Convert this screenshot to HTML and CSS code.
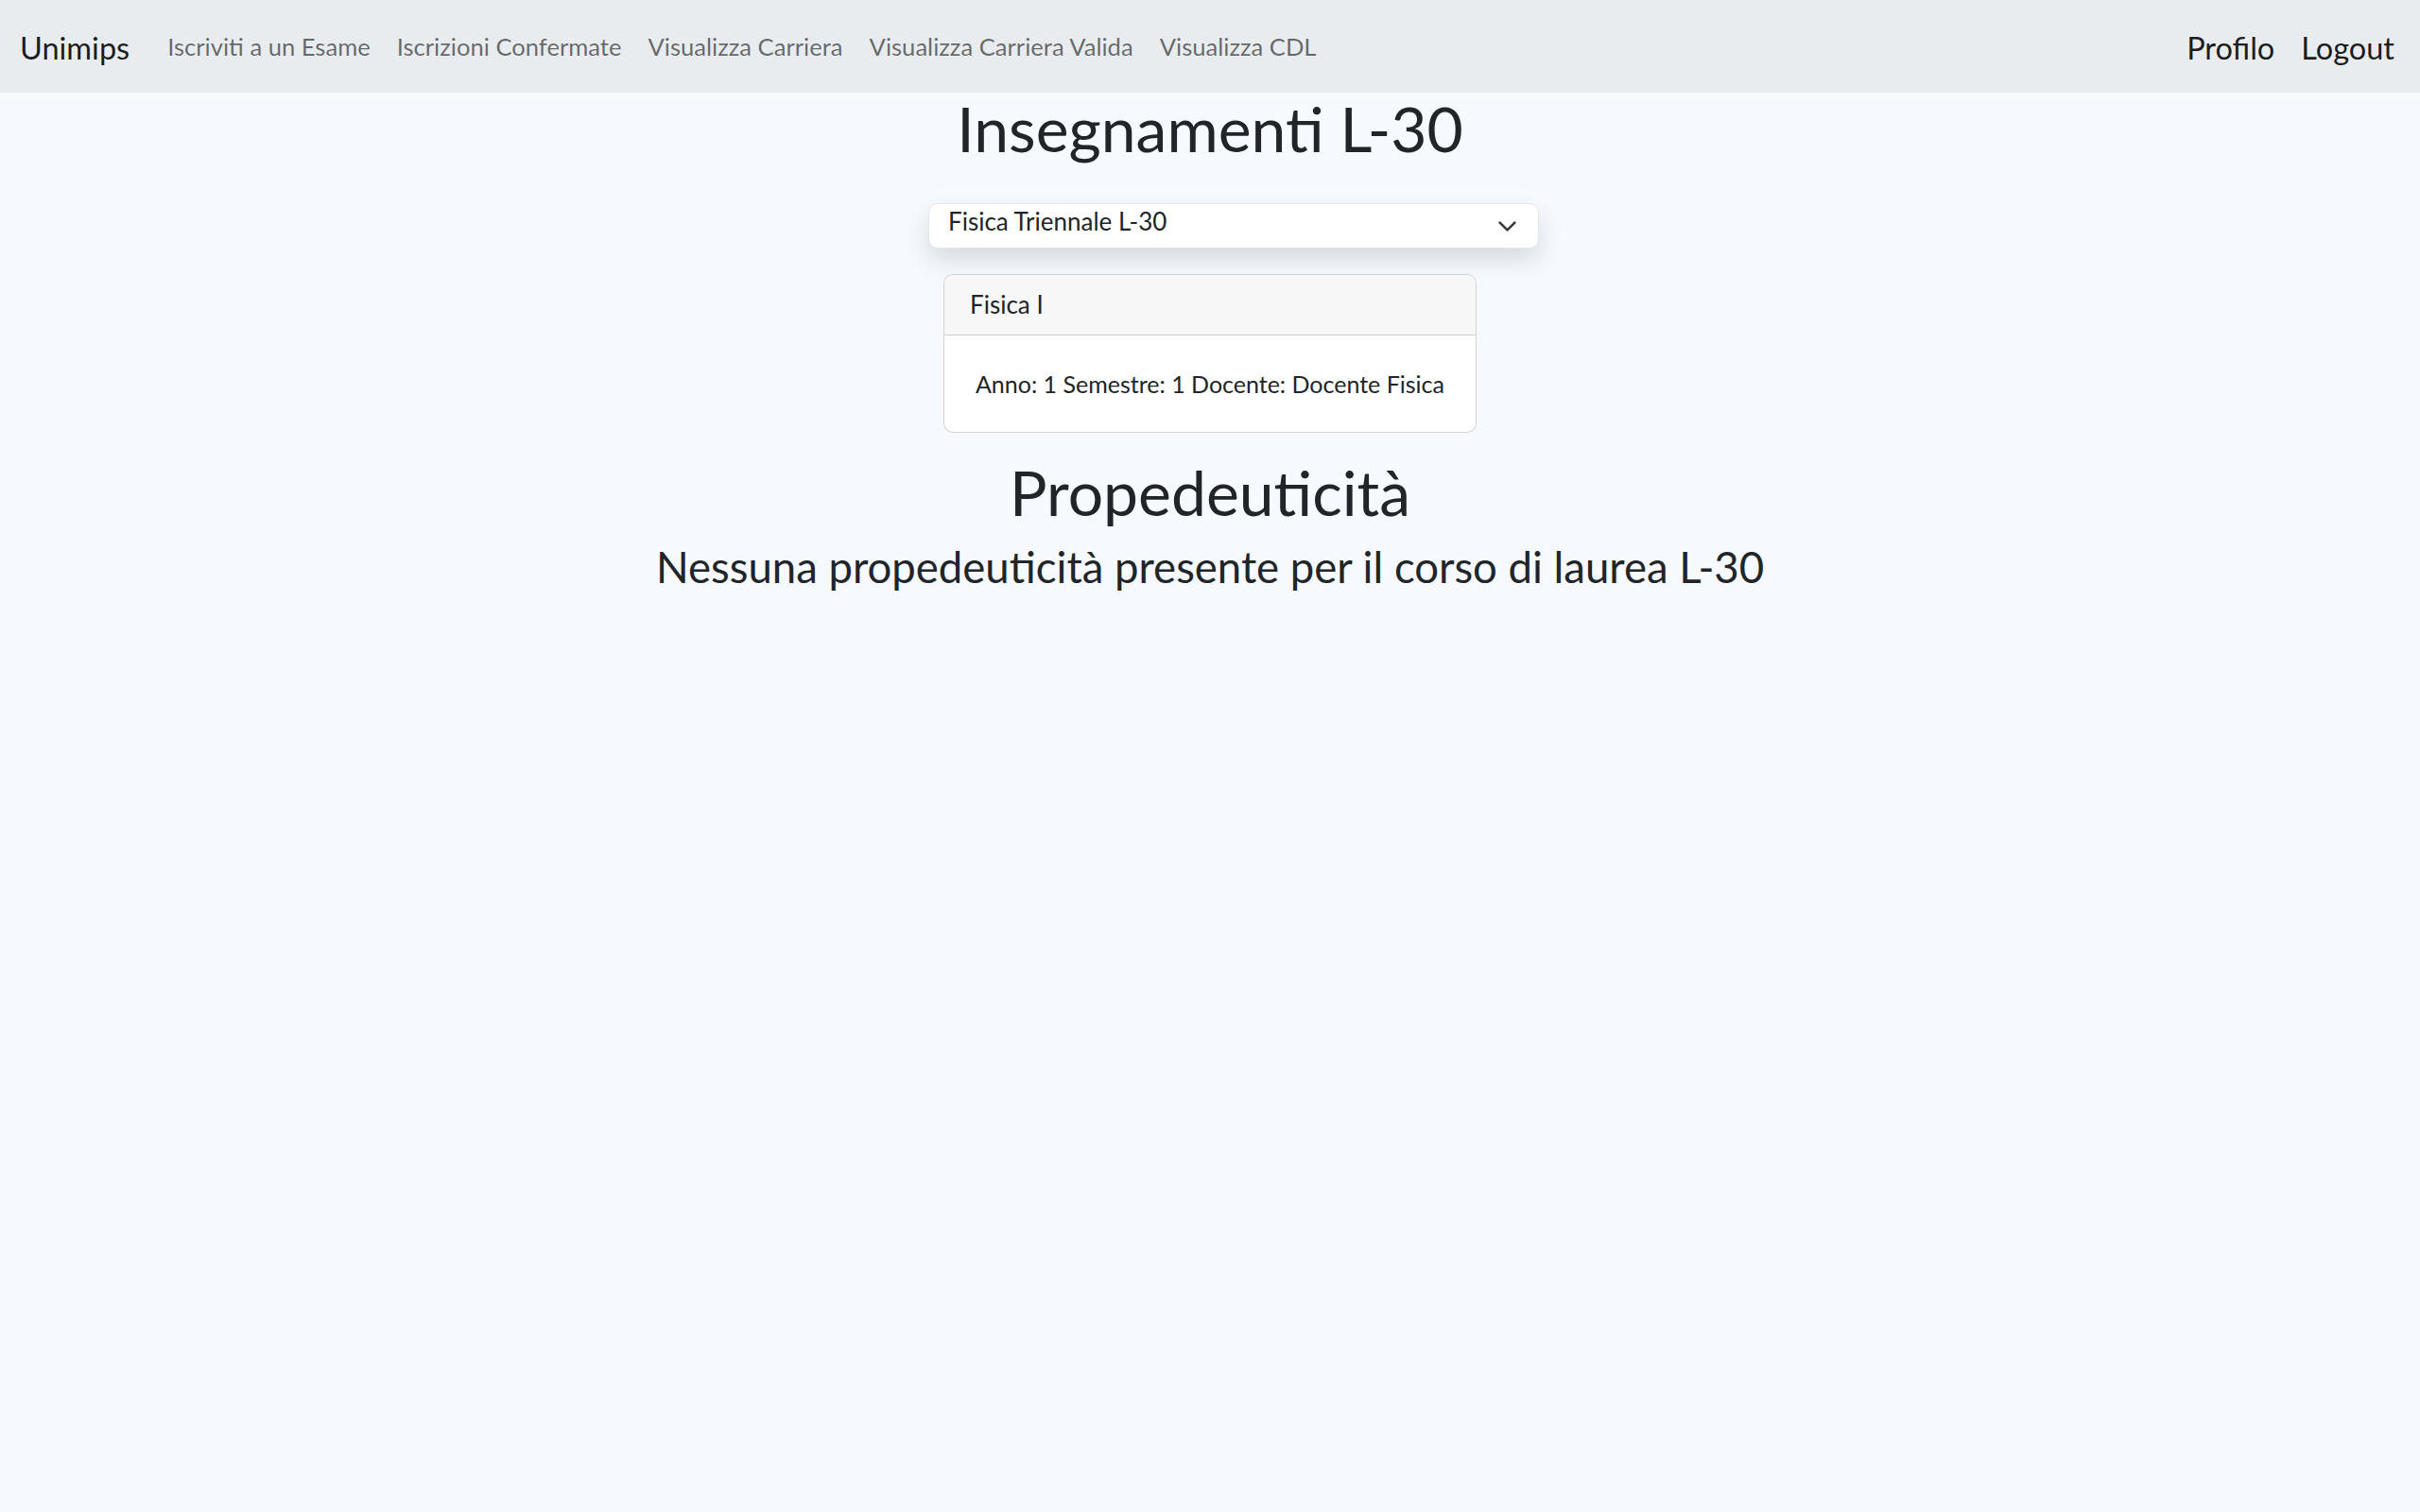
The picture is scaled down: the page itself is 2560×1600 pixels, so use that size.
FILE: index.html
```html
<!DOCTYPE html>
<html lang="it">
<head>
<meta charset="utf-8">
<title>Insegnamenti L-30</title>
<link rel="stylesheet" href="styles.css">
</head>
<body>
<nav class="navbar">
  <a class="brand" href="#">Unimips</a>
  <ul class="nav-links">
    <li><a class="nav-link" href="#">Iscriviti a un Esame</a></li>
    <li><a class="nav-link" href="#">Iscrizioni Confermate</a></li>
    <li><a class="nav-link" href="#">Visualizza Carriera</a></li>
    <li><a class="nav-link" href="#">Visualizza Carriera Valida</a></li>
    <li><a class="nav-link" href="#">Visualizza CDL</a></li>
  </ul>
  <div class="nav-right">
    <a class="brand-link" href="#">Profilo</a>
    <a class="brand-link" href="#">Logout</a>
  </div>
</nav>
<main class="main">
  <h1 class="title">Insegnamenti L-30</h1>
  <div class="select">
    <span class="select-text">Fisica Triennale L-30</span>
    <svg class="chevron" width="21" height="21" viewBox="0 0 16 16" aria-hidden="true"><path d="M2 5l6 6 6-6" fill="none" stroke="#343a40" stroke-width="2" stroke-linecap="round" stroke-linejoin="round"/></svg>
  </div>
  <div class="card">
    <div class="card-header">Fisica I</div>
    <div class="card-body">Anno: 1 Semestre: 1 Docente: Docente Fisica</div>
  </div>
  <h1 class="title title-second">Propedeuticità</h1>
  <h3 class="subtitle">Nessuna propedeuticità presente per il corso di laurea L-30</h3>
</main>
</body>
</html>
```
FILE: styles.css
```css
* { box-sizing: border-box; }
html, body { margin: 0; padding: 0; }
body {
  background: #f6f9fe;
  font-family: Lato, "Open Sans", sans-serif;
  color: #212529;
  min-height: 1600px;
}
a { text-decoration: none; }

.navbar {
  height: 98px;
  background: #e9ecef;
  display: flex;
  align-items: center;
  padding: 0 27px 0 21px;
}
.brand {
  font-size: 32.5px;
  line-height: 52px;
  padding-top: 3px;
  color: rgba(0,0,0,.9);
  margin-right: 26px;
}
.nav-links {
  list-style: none;
  margin: 0;
  padding: 0;
  display: flex;
  flex: 1;
}
.nav-link {
  display: block;
  font-size: 25.6px;
  line-height: 42px;
  padding: 0 14px 1px;
  color: rgba(0,0,0,.56);
}
.nav-right {
  display: flex;
  gap: 28px;
}
.brand-link {
  font-size: 32.5px;
  line-height: 52px;
  padding-top: 3px;
  color: rgba(0,0,0,.9);
}

.main {
  display: flex;
  flex-direction: column;
  align-items: center;
}
.title {
  margin: 2px 0 0;
  font-size: 66px;
  line-height: 72px;
  font-weight: 400;
}
.select {
  margin-top: 43px;
  margin-left: 50px;
  width: 646px;
  height: 48px;
  background: #fff;
  border: 1px solid #e3e6ea;
  border-radius: 10px;
  box-shadow: 0 12px 26px rgba(0,0,0,.13);
  display: flex;
  align-items: center;
  justify-content: space-between;
  padding: 0 22px 0 20px;
}
.select-text {
  font-size: 26px;
  line-height: 32px;
  padding-bottom: 11px;
}
.chevron { display: block; }

.card {
  margin-top: 27px;
  width: 564px;
  background: #fff;
  border: 1px solid rgba(0,0,0,.175);
  border-radius: 10px;
  overflow: hidden;
}
.card-header {
  background: #f7f7f7;
  border-bottom: 1px solid rgba(0,0,0,.175);
  font-size: 26px;
  line-height: 32px;
  padding: 15px 27px 16px;
}
.card-body {
  font-size: 25px;
  line-height: 42px;
  padding: 30px 0;
  text-align: center;
  white-space: nowrap;
}
.title-second { margin-top: 27px; }
.subtitle {
  margin: 16px 0 0;
  font-size: 45.5px;
  line-height: 1.2;
  font-weight: 400;
}
```
